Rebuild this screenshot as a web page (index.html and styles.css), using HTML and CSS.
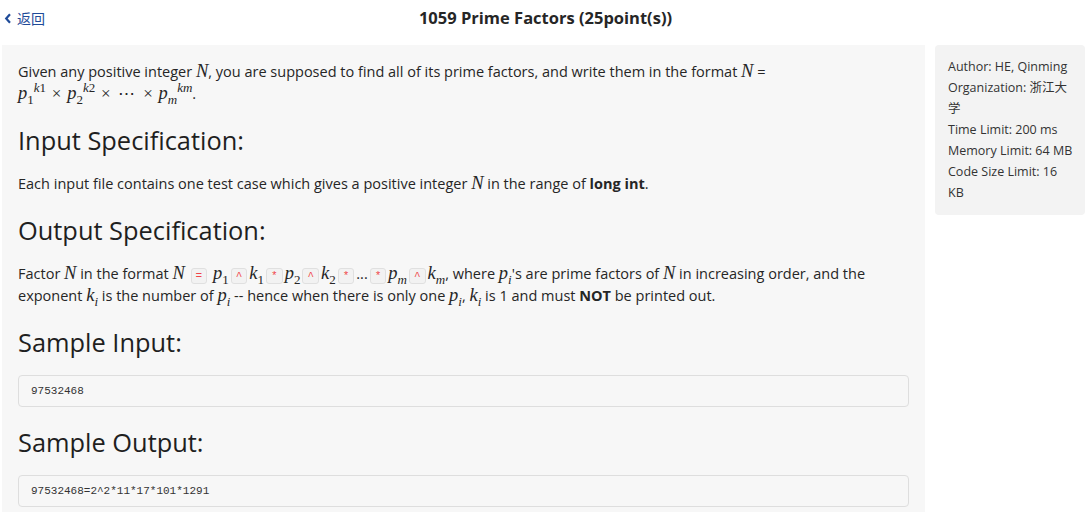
FILE: index.html
```html
<!DOCTYPE html>
<html>
<head>
<meta charset="utf-8">
<link rel="stylesheet" href="styles.css">
</head>
<body>
<header class="topbar">
  <a class="back" href="#"><svg class="chev" width="8" height="11" viewBox="0 0 8 11"><path d="M6 1.2 L2.2 5.5 L6 9.8" fill="none" stroke="currentColor" stroke-width="2.2"/></svg><span>返回</span></a>
  <h1 class="title">1059 Prime Factors (25point(s))</h1>
</header>
<div class="layout">
  <main class="panel">
    <p>Given any positive integer <span class="m">N</span>, you are supposed to find all of its prime factors, and write them in the format <span class="m">N</span> = <span class="expr"><span class="m">p<sub>1</sub><sup>k<i>1</i></sup></span> <span class="op">×</span> <span class="m">p<sub>2</sub><sup>k<i>2</i></sup></span> <span class="op">×</span> <span class="op">⋯</span> <span class="op">×</span> <span class="m">p<sub class="it">m</sub><sup>km</sup></span>.</span></p>
    <h2>Input Specification:</h2>
    <p>Each input file contains one test case which gives a positive integer <span class="m">N</span> in the range of <b>long int</b>.</p>
    <h2>Output Specification:</h2>
    <p>Factor <span class="m">N</span> in the format <span class="m">N</span> <code class="tag">=</code> <span class="m">p<sub>1</sub></span><code class="tag">^</code><span class="m">k<sub>1</sub></span><code class="tag">*</code><span class="m">p<sub>2</sub></span><code class="tag">^</code><span class="m">k<sub>2</sub></span><code class="tag">*</code>...<code class="tag">*</code><span class="m">p<sub class="it">m</sub></span><code class="tag">^</code><span class="m">k<sub class="it">m</sub></span>, where <span class="m">p<sub class="it">i</sub></span>'s are prime factors of <span class="m">N</span> in increasing order, and the exponent <span class="m">k<sub class="it">i</sub></span> is the number of <span class="m">p<sub class="it">i</sub></span> -- hence when there is only one <span class="m">p<sub class="it">i</sub></span>, <span class="m">k<sub class="it">i</sub></span> is 1 and must <b>NOT</b> be printed out.</p>
    <h2>Sample Input:</h2>
    <pre class="code">97532468</pre>
    <h2>Sample Output:</h2>
    <pre class="code">97532468=2^2*11*17*101*1291</pre>
  </main>
  <aside class="info">
    <div>Author: HE, Qinming</div>
    <div>Organization: 浙江大学</div>
    <div>Time Limit: 200 ms</div>
    <div>Memory Limit: 64 MB</div>
    <div>Code Size Limit: 16 KB</div>
  </aside>
</div>
</body>
</html>
```
FILE: styles.css
```css
html, body {
  margin: 0;
  padding: 0;
  background: #ffffff;
}
body {
  font-family: "Open Sans", "Noto Sans CJK SC", sans-serif;
  color: #262626;
  overflow: hidden;
}
.topbar {
  position: relative;
  height: 36px;
  display: flex;
  align-items: center;
  justify-content: center;
}
.back {
  position: absolute;
  left: 4px;
  top: 9px;
  display: flex;
  align-items: center;
  gap: 5px;
  color: #1f4b99;
  text-decoration: none;
  font-size: 14px;
  line-height: 18px;
  font-family: "Noto Sans CJK SC", sans-serif;
}
.chev { display: block; }
.title {
  margin: 0;
  font-size: 16.5px;
  font-weight: 700;
  color: #262626;
  line-height: 36px;
}
.layout {
  display: flex;
  align-items: flex-start;
  gap: 10px;
  padding: 9px 6px 0 2px;
}
.panel {
  flex: 1;
  background: #f7f7f7;
  padding: 16px 16px 20px 16px;
  min-height: 480px;
  box-sizing: border-box;
}
.panel p {
  margin: 0;
  font-size: 14.5px;
  line-height: 22px;
}
.panel h2 {
  margin: 18px 0 16px;
  font-size: 25.4px;
  font-weight: 400;
  line-height: 34px;
  color: #1f1f1f;
}
.expr { white-space: nowrap; }
.m {
  font-family: "Liberation Serif", serif;
  font-style: italic;
  font-size: 18.5px;
  line-height: 1;
}
.m sub, .m sup {
  font-size: 13px;
  line-height: 0;
}
.m sub { font-style: normal; }
.m sub.it { font-style: italic; }
.m sup i { font-style: normal; }
.m sup { vertical-align: 0.55em; }
.op {
  font-family: "Liberation Serif", serif;
  font-size: 17px;
  padding: 0 2px;
}
.tag {
  display: inline-block;
  font-family: "Liberation Mono", monospace;
  font-size: 11px;
  line-height: 14px;
  color: #f0464a;
  background: #f2f2f2;
  border: 1px solid #e0e0e0;
  border-radius: 3px;
  padding: 0 4px;
  margin: 0 2px;
  vertical-align: 0;
}
.code {
  margin: 0;
  font-family: "Liberation Mono", monospace;
  font-size: 11px;
  line-height: 14px;
  padding: 8px 12px;
  border: 1px solid #dedede;
  border-radius: 4px;
  background: #f7f7f7;
  color: #333;
}
.info {
  width: 150px;
  box-sizing: border-box;
  background: #f3f3f3;
  border-radius: 4px;
  padding: 11px 10px 12px 13px;
  font-size: 12.5px;
  line-height: 21px;
  color: #333;
}
```
